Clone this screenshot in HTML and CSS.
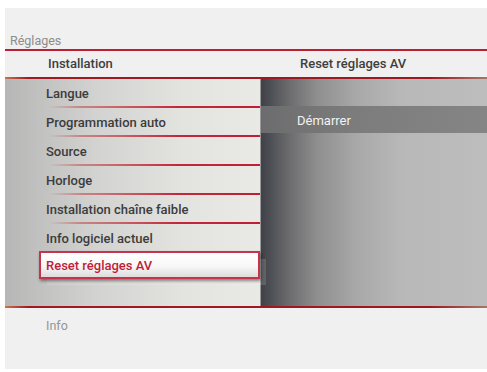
FILE: index.html
```html
<!DOCTYPE html>
<html lang="fr">
<head>
  <meta charset="UTF-8">
  <meta name="viewport" content="width=device-width, initial-scale=1.0">
  <title>Réglages</title>
  <link rel="stylesheet" href="styles.css">
</head>
<body>
  <div class="panel">
    <div class="crumb">Réglages</div>
    <div class="header">
      <div class="header-left">Installation</div>
      <div class="header-right">Reset réglages AV</div>
    </div>
    <div class="main">
      <ul class="menu">
        <li class="item">Langue</li>
        <li class="item">Programmation auto</li>
        <li class="item">Source</li>
        <li class="item">Horloge</li>
        <li class="item">Installation chaîne faible</li>
        <li class="item">Info logiciel actuel</li>
        <li class="item selected">Reset réglages AV</li>
      </ul>
      <div class="sub">
        <div class="sub-item">Démarrer</div>
      </div>
    </div>
    <div class="info">Info</div>
  </div>
</body>
</html>
```

FILE: styles.css
```css
* {
  margin: 0;
  padding: 0;
  box-sizing: border-box;
}

body {
  font-family: Roboto, "Liberation Sans", sans-serif;
  background-color: #ffffff;
  width: 487px;
  height: 372px;
  overflow: hidden;
}

.panel {
  margin: 8px 0 0 5px;
  width: 482px;
  height: 361px;
  background-color: #eff0ef;
  display: flex;
  flex-direction: column;
}

.crumb {
  height: 43px;
  padding: 25px 0 0 5px;
  font-size: 12.5px;
  color: #8c8c8c;
  border-bottom: 2px solid #be1e32;
}

.header {
  display: flex;
  height: 28px;
  font-size: 13px;
  font-weight: 500;
  color: #3e3e3e;
  border-bottom: 2px solid transparent;
  border-image: linear-gradient(to right, #c87850 0, #a11a22 5%, #9c1820 88%, #a87868 100%) 1;
}

.header-left {
  width: 256px;
  padding: 5px 0 0 43px;
}

.header-right {
  padding: 5px 0 0 39px;
}

.main {
  display: flex;
  height: 229px;
  border-bottom: 2px solid transparent;
  border-image: linear-gradient(to right, #c87850 0, #a11a22 5%, #9c1820 88%, #a87868 100%) 1;
}

.menu {
  list-style: none;
  width: 256px;
  height: 227px;
  background: linear-gradient(to right, #b6b6b6 0, #d2d2d0 35%, #e3e3e0 70%, #e9e9e6 100%);
  border-right: 1px solid #9a9a9a;
}

.item {
  position: relative;
  height: 29px;
  padding: 7px 0 0 41px;
  font-size: 13px;
  font-weight: 500;
  color: #3c3c3c;
}

.item::after {
  content: "";
  position: absolute;
  left: 44px;
  right: 0;
  bottom: 0;
  height: 2px;
  background: linear-gradient(to right, rgba(190, 30, 50, 0) 0, rgba(190, 60, 60, 0.5) 15%, #c4283c 60%, #c01e34 100%);
}

.item.selected {
  margin: -2px 0 0 34px;
  width: 221px;
  height: 28px;
  padding: 5px 0 0 5px;
  color: #c01e38;
  border: 2px solid #c8324a;
  background: linear-gradient(to bottom, #ffffff 0, #f8f8f8 55%, #dcdcdc 100%);
  box-shadow: 1px 2px 3px rgba(0, 0, 0, 0.45), 7px 7px 0 -1px rgba(255, 255, 255, 0.15);
}

.item.selected::after {
  display: none;
}

.sub {
  flex: 1;
  padding-top: 27px;
  background: linear-gradient(to right, #3f4148 0, #6a6a6c 12%, #8f8f8f 25%, #a8a8a8 42%, #b8b8b8 62%, #bdbdbd 100%);
}

.sub-item {
  height: 27px;
  padding: 7px 0 0 36px;
  font-size: 13px;
  color: #f2f2f2;
  background: linear-gradient(to right, #6c6c6e 0, #7c7c7c 40%, #858585 100%);
}

.info {
  padding: 10px 0 0 41px;
  font-size: 12.5px;
  color: #969696;
}
```
